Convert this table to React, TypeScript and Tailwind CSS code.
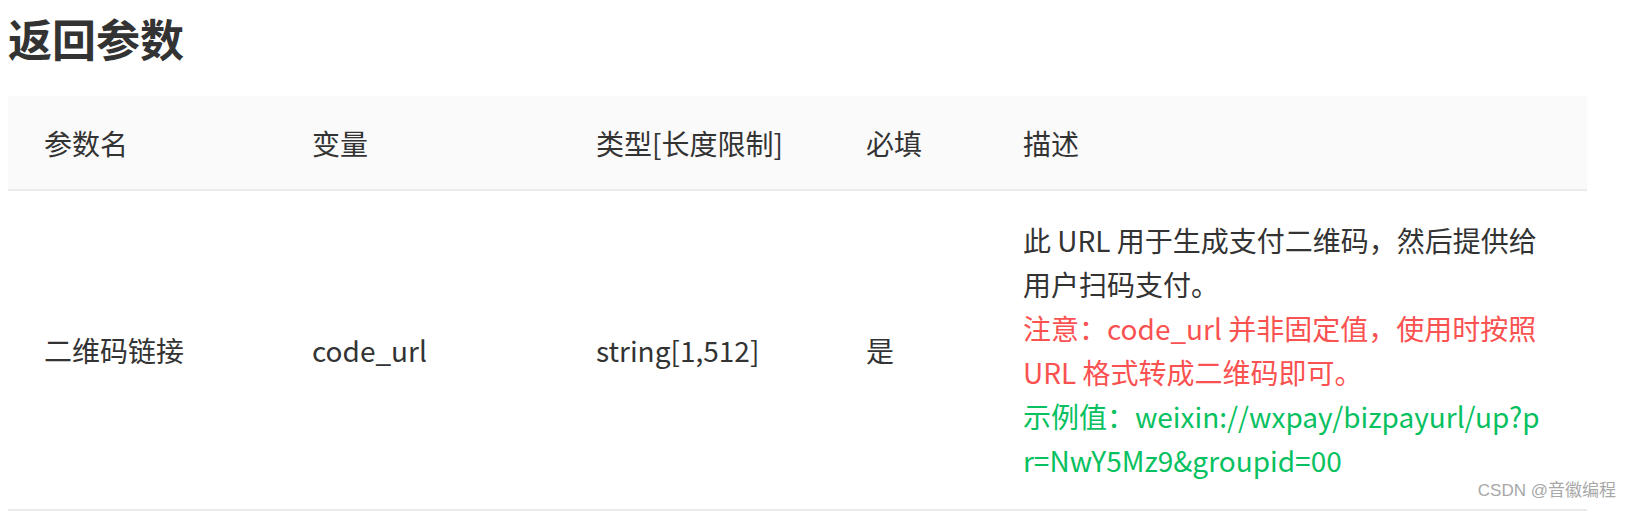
import React from "react";

const font = { fontFamily: '"Noto Sans CJK SC", "Noto Sans", sans-serif' };

export default function App() {
  return (
    <div
      className="relative w-[1626px] h-[512px] bg-white text-[#333333] px-[8px] overflow-hidden"
      style={font}
    >
      <h1 className="text-[44px] leading-[77px] font-bold m-0 text-[#333333]">返回参数</h1>
      <table className="table-fixed border-collapse w-[1579px] mt-[19px] text-[28px]">
        <colgroup>
          <col className="w-[268px]" />
          <col className="w-[284px]" />
          <col className="w-[270px]" />
          <col className="w-[157px]" />
          <col className="w-[600px]" />
        </colgroup>
        <thead>
          <tr className="bg-[#fafafa] border-b-2 border-[#ebebeb]">
            <th className="text-left font-normal h-[94px] pl-[36px] leading-[44px]">参数名</th>
            <th className="text-left font-normal pl-[36px] leading-[44px]">变量</th>
            <th className="text-left font-normal pl-[36px] leading-[44px]">类型[长度限制]</th>
            <th className="text-left font-normal pl-[36px] leading-[44px]">必填</th>
            <th className="text-left font-normal pl-[36px] leading-[44px]">描述</th>
          </tr>
        </thead>
        <tbody>
          <tr className="border-b-2 border-[#ebebeb]">
            <td className="pl-[36px] align-middle leading-[44px]">二维码链接</td>
            <td className="pl-[36px] align-middle leading-[44px]">code_url</td>
            <td className="pl-[36px] align-middle leading-[44px]">string[1,512]</td>
            <td className="pl-[36px] align-middle leading-[44px]">是</td>
            <td className="pl-[36px] pt-[27px] pb-[27px] align-middle leading-[44px] whitespace-nowrap">
              <div>此 URL 用于生成支付二维码，然后提供给</div>
              <div>用户扫码支付。</div>
              <div className="text-[#fa5151]">注意：code_url 并非固定值，使用时按照</div>
              <div className="text-[#fa5151]">URL 格式转成二维码即可。</div>
              <div className="text-[#07c160]">示例值：weixin://wxpay/bizpayurl/up?p</div>
              <div className="text-[#07c160]">r=NwY5Mz9&amp;groupid=00</div>
            </td>
          </tr>
        </tbody>
      </table>
      <div
        className="absolute right-[10px] top-[480px] text-[17px] leading-[22px] text-[#a8a8a8]"
        style={{ fontFamily: '"Liberation Sans", "Noto Sans CJK SC", sans-serif' }}
      >
        CSDN @音徽编程
      </div>
    </div>
  );
}
